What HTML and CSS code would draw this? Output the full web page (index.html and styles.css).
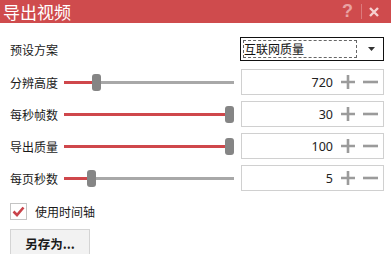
FILE: index.html
```html
<!DOCTYPE html>
<html>
<head>
    <title>导出视频</title>
    <meta charset="utf-8">
    <link rel="stylesheet" href="styles.css">
</head>
<body>
    <div class="titlebar">
        <span class="title">导出视频</span>
        <span class="help">?</span>
        <span class="sep"></span>
        <svg class="close" width="10" height="10" viewBox="0 0 10 10"><path d="M1 1 L9 9 M9 1 L1 9" stroke="#f6d0d0" stroke-width="2.4"/></svg>
    </div>

    <div class="content">
        <div class="preset">
            <span class="label">预设方案</span>
            <div class="select">
                <span class="focus">互联网质量</span>
                <svg class="arrow" width="7" height="4" viewBox="0 0 7 4"><path d="M0 0 H7 L3.5 4 Z" fill="#333"/></svg>
            </div>
        </div>

        <div class="row">
            <span class="label">分辨高度</span>
            <div class="slider">
                <div class="fill" style="width: 28px;"></div>
                <div class="thumb" style="left: 28px;"></div>
            </div>
            <div class="spin">
                <span class="value">720</span>
                <svg class="plus" width="14" height="14" viewBox="0 0 14 14"><path d="M7 0 V14 M0 7 H14" stroke="#9b9b9b" stroke-width="2.6"/></svg>
                <svg class="minus" width="15" height="14" viewBox="0 0 15 14"><path d="M0 7 H15" stroke="#9b9b9b" stroke-width="2.6"/></svg>
            </div>
        </div>

        <div class="row">
            <span class="label">每秒帧数</span>
            <div class="slider">
                <div class="fill" style="width: 161px;"></div>
                <div class="thumb" style="left: 161px;"></div>
            </div>
            <div class="spin">
                <span class="value">30</span>
                <svg class="plus" width="14" height="14" viewBox="0 0 14 14"><path d="M7 0 V14 M0 7 H14" stroke="#9b9b9b" stroke-width="2.6"/></svg>
                <svg class="minus" width="15" height="14" viewBox="0 0 15 14"><path d="M0 7 H15" stroke="#9b9b9b" stroke-width="2.6"/></svg>
            </div>
        </div>

        <div class="row">
            <span class="label">导出质量</span>
            <div class="slider">
                <div class="fill" style="width: 161px;"></div>
                <div class="thumb" style="left: 161px;"></div>
            </div>
            <div class="spin">
                <span class="value">100</span>
                <svg class="plus" width="14" height="14" viewBox="0 0 14 14"><path d="M7 0 V14 M0 7 H14" stroke="#9b9b9b" stroke-width="2.6"/></svg>
                <svg class="minus" width="15" height="14" viewBox="0 0 15 14"><path d="M0 7 H15" stroke="#9b9b9b" stroke-width="2.6"/></svg>
            </div>
        </div>

        <div class="row">
            <span class="label">每页秒数</span>
            <div class="slider">
                <div class="fill" style="width: 23px;"></div>
                <div class="thumb" style="left: 23px;"></div>
            </div>
            <div class="spin">
                <span class="value">5</span>
                <svg class="plus" width="14" height="14" viewBox="0 0 14 14"><path d="M7 0 V14 M0 7 H14" stroke="#9b9b9b" stroke-width="2.6"/></svg>
                <svg class="minus" width="15" height="14" viewBox="0 0 15 14"><path d="M0 7 H15" stroke="#9b9b9b" stroke-width="2.6"/></svg>
            </div>
        </div>

        <div class="check">
            <span class="box">
                <svg width="13" height="11" viewBox="0 0 13 11"><path d="M1.5 5.5 L5 9 L11.5 1.5" fill="none" stroke="#c9434a" stroke-width="2.6"/></svg>
            </span>
            <span>使用时间轴</span>
        </div>

        <button class="save">另存为...</button>
    </div>
</body>
</html>
```

FILE: styles.css
```css
body {
    margin: 0;
    background-color: white;
    font-family: "Noto Sans CJK SC", "Noto Sans", sans-serif;
    font-size: 12px;
    color: #1a1a1a;
    overflow: hidden;
}

.titlebar {
    display: flex;
    align-items: center;
    height: 23px;
    padding-left: 3px;
    background-color: #cf4b4d;
    color: white;
}

.title {
    flex: 1;
    font-size: 17px;
    line-height: 23px;
}

.help {
    font-family: "Liberation Sans", sans-serif;
    font-weight: bold;
    font-size: 18px;
    line-height: 23px;
    color: #e9a2a3;
}

.sep {
    width: 1px;
    height: 15px;
    margin: 0 7px 0 8px;
    background-color: #dc7a7c;
}

.close {
    margin-right: 12px;
}

.content {
    padding: 0 7px 0 10px;
}

.label {
    width: 54px;
    flex-shrink: 0;
}

.preset {
    display: flex;
    align-items: center;
    height: 24px;
    margin-top: 14px;
}

.select {
    display: flex;
    align-items: center;
    margin-left: auto;
    width: 142px;
    height: 22px;
    border: 1px solid #111;
}

.focus {
    width: 112px;
    height: 16px;
    margin-left: 2px;
    line-height: 16px;
    border: 1px dashed #666;
    font-size: 12px;
    color: #111;
}

.arrow {
    margin-left: 11px;
}

.row {
    display: flex;
    align-items: center;
    height: 26px;
    margin-top: 6px;
}

.preset + .row {
    margin-top: 8px;
}

.slider {
    position: relative;
    width: 170px;
    height: 3px;
    background-color: #a8a8a8;
}

.fill {
    height: 3px;
    background-color: #cf474b;
}

.thumb {
    position: absolute;
    top: -7px;
    width: 9px;
    height: 17px;
    border-radius: 3px;
    background-color: #858585;
}

.spin {
    display: flex;
    align-items: center;
    margin-left: auto;
    width: 141px;
    height: 24px;
    border: 1px solid #d0d0d0;
}

.value {
    flex: 1;
    text-align: right;
    font-family: "Noto Sans", sans-serif;
    font-size: 12.5px;
    color: #222;
}

.plus {
    margin-left: 8px;
}

.minus {
    margin-left: 8px;
    margin-right: 5px;
}

.check {
    display: flex;
    align-items: center;
    margin-top: 12px;
    height: 17px;
}

.box {
    display: flex;
    align-items: center;
    justify-content: center;
    width: 15px;
    height: 15px;
    margin-right: 8px;
    border: 1px solid #c4c4c4;
}

.save {
    display: block;
    margin-top: 9px;
    width: 80px;
    height: 28px;
    border: 1px solid #d4d4d4;
    background-color: #f2f2f2;
    font-family: "Noto Sans CJK SC", sans-serif;
    font-size: 12.5px;
    font-weight: bold;
    color: #1a1a1a;
}
```
